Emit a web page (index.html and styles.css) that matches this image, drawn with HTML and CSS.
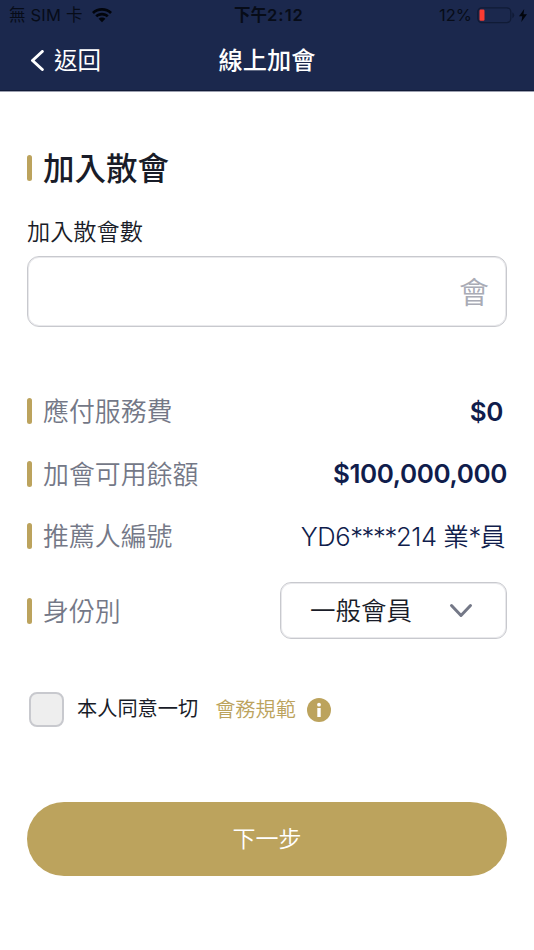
FILE: index.html
```html
<!DOCTYPE html>
<html lang="zh-Hant">
<head>
<meta charset="utf-8">
<meta name="viewport" content="width=device-width, initial-scale=1">
<title>線上加會</title>
<link rel="stylesheet" href="styles.css">
</head>
<body>
<header class="top">
  <div class="status">
    <div class="status-left"><span>無 SIM 卡</span>
      <svg class="wifi" viewBox="0 0 20 15"><path d="M10 0C6.200 0 2.700 1.500 0 4L1.900 6C4 4 6.900 2.800 10 2.800S16 4 18.100 6L20 4C17.300 1.500 13.800 0 10 0Z"/><path d="M10 4.800C7.400 4.800 5.100 5.800 3.300 7.400L5.200 9.300C6.500 8.200 8.200 7.500 10 7.500S13.500 8.200 14.800 9.300L16.700 7.400C14.900 5.800 12.600 4.800 10 4.800Z"/><path d="M10 9.500C8.700 9.500 7.500 10 6.600 10.800L10 14.300L13.400 10.800C12.500 10 11.300 9.500 10 9.500Z"/></svg>
    </div>
    <div class="status-time">下午<span class="clock">2:12</span></div>
    <div class="status-right"><span>12%</span>
      <svg class="battery" viewBox="0 0 38 17"><rect x=".8" y=".8" width="33" height="14.800" rx="4" fill="none" stroke="#101b36" stroke-width="1.300"/><rect x="2.500" y="2.600" width="5" height="11.200" rx="1.200" fill="#fb3b32"/><path d="M35.300 5.200Q37.200 6.200 37.200 8.200T35.300 11.200Z" fill="#101b36"/></svg>
      <svg class="bolt" viewBox="0 0 8 13"><path d="M5.200 0L0 7.200H3.300L2.300 13L8 5.300H4.500Z"/></svg>
    </div>
  </div>
  <nav class="nav">
    <a class="back"><svg class="back-icon" viewBox="0 0 14 22"><path d="M12.300 1.500L2.500 10.500L12.300 19.500"/></svg><span>返回</span></a>
    <h1 class="nav-title">線上加會</h1>
    <span></span>
  </nav>
</header>
<main class="content">
  <h2 class="section-title marked"><span>加入散會</span></h2>
  <label class="field-label">加入散會數</label>
  <div class="field">會</div>
  <div class="rows">
    <div class="row"><span class="row-label marked"><span>應付服務費</span></span><span class="amount amount-fee">$0</span></div>
    <div class="row"><span class="row-label marked"><span>加會可用餘額</span></span><span class="amount">$100,000,000</span></div>
    <div class="row"><span class="row-label marked"><span>推薦人編號</span></span><span class="member">YD6<span class="mask">****</span>214 業<span class="mask">*</span>員</span></div>
    <div class="row row-select"><span class="row-label marked"><span>身份別</span></span>
      <div class="select"><span>一般會員</span><svg class="chevron" viewBox="0 0 24 15"><path d="M2.500 2.500L12 12.500L21.500 2.500"/></svg></div>
    </div>
  </div>
  <div class="consent">
    <span class="checkbox"></span>
    <span class="consent-text">本人同意一切</span>
    <a class="rules">會務規範</a>
    <svg class="info" viewBox="0 0 24 24"><circle cx="12" cy="12" r="12" fill="#bca35d"/><circle cx="12" cy="6.700" r="1.900" fill="#fff"/><path d="M10.300 10H13.700V19H10.300Z" fill="#fff"/></svg>
  </div>
  <button class="next">下一步</button>
</main>
</body>
</html>
```
FILE: styles.css
```css
* { box-sizing: border-box; }
body {
  margin: 0;
  background: #fff;
  color: #191c28;
  font-family: Inter, "Noto Sans CJK TC", sans-serif;
}
h1, h2 { margin: 0; }
svg { display: block; flex: none; }
.top {
  height: 92px;
  background: #1b284d;
  border-bottom: 1px solid #9b9faf;
  box-shadow: inset 0 -1px #111a38;
}
.status {
  display: grid;
  grid-template-columns: 1fr auto 1fr;
  height: 30px;
  padding: 0 7px 0 9px;
  align-items: center;
  color: #070c18;
  font-size: 16.500px;
  line-height: 30px;
}
.status-left, .status-right { display: flex; align-items: center; }
.status-left { gap: 9px; letter-spacing: .2px; }
.status-right { justify-content: flex-end; }
.status-time { margin-left: 2px; font-weight: 600; }
.clock { letter-spacing: 1px; }
.wifi { width: 20px; height: 15px; fill: #02050c; }
.battery { width: 38px; height: 17px; margin-left: 5px; }
.bolt { width: 8px; height: 13px; margin-left: 4px; fill: #02050c; }
.nav {
  display: grid;
  grid-template-columns: 1fr auto 1fr;
  height: 61px;
  padding: 0 30px;
  align-items: center;
  color: #fff;
}
.back { display: flex; align-items: center; gap: 10px; font-size: 23.500px; line-height: 60px; }
.back-icon { width: 14px; height: 22px; fill: none; stroke: #fff; stroke-width: 3; stroke-linecap: round; stroke-linejoin: round; }
.nav-title { font-size: 24.200px; font-weight: 500; line-height: 60px; }
.content { padding: 52px 27px 0; }
.marked { display: flex; align-items: center; gap: 11px; }
.marked::before { content: ""; width: 5px; height: 26px; border-radius: 3px; background: #bca35d; }
.section-title { height: 48px; font-size: 31.500px; font-weight: 500; line-height: 48px; }
.section-title span { padding-top: 1px; }
.field-label { display: block; margin-top: 22px; height: 34px; padding-top: 1px; font-size: 23.200px; font-weight: 350; line-height: 34px; }
.field {
  display: flex;
  align-items: center;
  justify-content: flex-end;
  height: 71px;
  margin-top: 8px;
  padding-right: 17px;
  border: 1px solid #c8c9ce;
  box-shadow: inset 0 0 0 1px #e9e9ec;
  border-radius: 12px;
  color: #a9abb5;
  font-size: 30px;
  font-weight: 350;
  line-height: 1;
}
.rows { margin-top: 53px; }
.row { display: flex; align-items: center; justify-content: space-between; height: 62.500px; }
.row-label { color: #747887; font-size: 25.900px; font-weight: 350; line-height: 40px; }
.row-label span { padding-top: 2px; }
.amount { padding-top: 1px; color: #101d4c; font-size: 26px; font-weight: 600; line-height: 40px; letter-spacing: -.4px; }
.amount-fee { margin-right: 4px; }
.member { margin-right: 2px; padding-top: 2px; color: #101d4c; font-size: 25.500px; font-weight: 350; line-height: 40px; letter-spacing: -.4px; }
.mask { letter-spacing: -1.300px; }
.row-select { height: 86px; }
.select {
  display: flex;
  align-items: center;
  justify-content: space-between;
  width: 227px;
  height: 57px;
  padding: 0 33px 0 29px;
  border: 1px solid #c8c9ce;
  box-shadow: inset 0 0 0 1px #e9e9ec;
  border-radius: 11px;
  font-size: 25.500px;
  font-weight: 350;
  line-height: 40px;
}
.chevron { width: 24px; height: 15px; fill: none; stroke: #747887; stroke-width: 3; stroke-linecap: round; stroke-linejoin: round; }
.consent { display: flex; align-items: center; height: 36px; margin-top: 38px; font-size: 20.200px; font-weight: 400; line-height: 30px; }
.checkbox { width: 35px; height: 35px; margin-left: 2px; border: 2px solid #c8c9ce; border-radius: 8px; background: #eee; }
.consent-text { margin: -2px 0 0 13px; }
.rules { margin-left: 17px; color: #bca35d; font-weight: 350; }
.info { width: 24px; height: 24px; margin-left: 11px; }
.next {
  display: block;
  width: 100%;
  height: 74px;
  margin-top: 74px;
  padding: 0;
  border: 0;
  border-radius: 37px;
  background: #bca35d;
  color: #fff;
  font: 350 23px/74px Inter, "Noto Sans CJK TC", sans-serif;
}
```
